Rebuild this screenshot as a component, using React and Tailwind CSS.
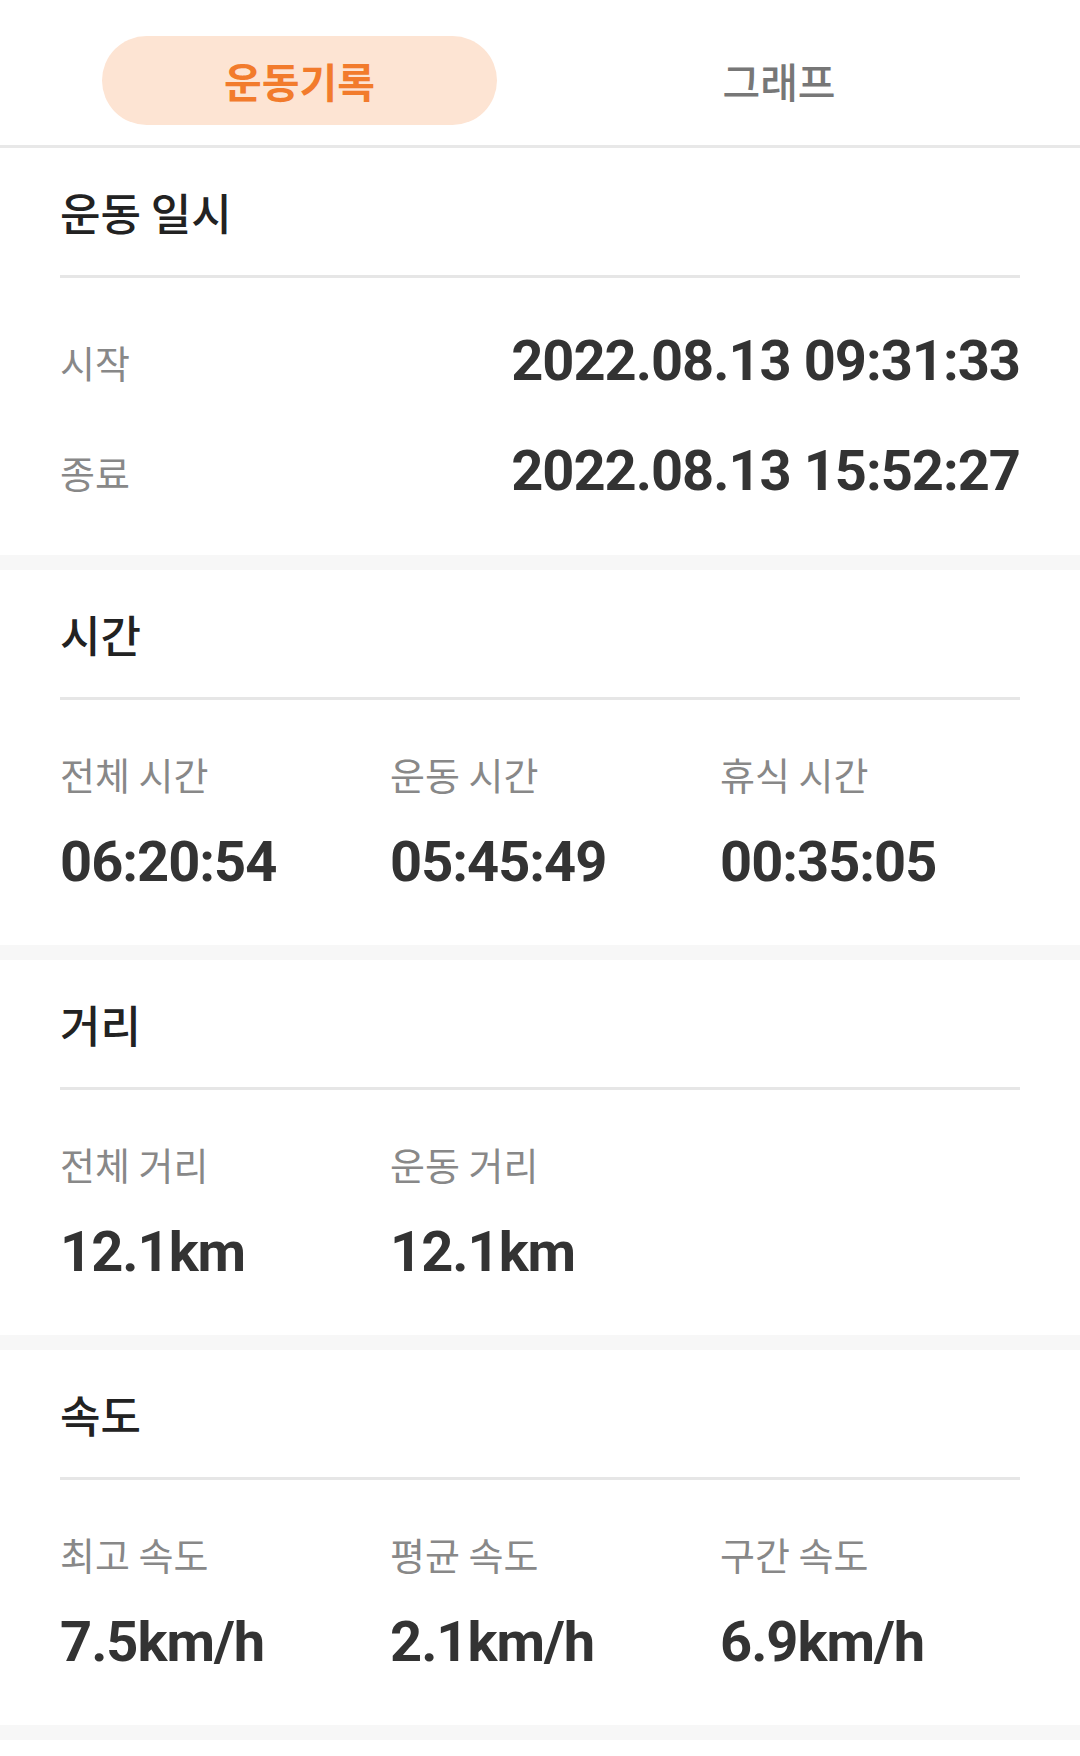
import React from 'react';

const KR = { fontFamily: '"Noto Sans CJK KR", "Noto Sans", sans-serif' };
const NUM = { fontFamily: 'Roboto, "Noto Sans CJK KR", sans-serif' };

const sections = [
    {
        title: '시간',
        items: [
            { label: '전체 시간', value: '06:20:54' },
            { label: '운동 시간', value: '05:45:49' },
            { label: '휴식 시간', value: '00:35:05' },
        ],
    },
    {
        title: '거리',
        items: [
            { label: '전체 거리', value: '12.1km' },
            { label: '운동 거리', value: '12.1km' },
        ],
    },
    {
        title: '속도',
        items: [
            { label: '최고 속도', value: '7.5km/h' },
            { label: '평균 속도', value: '2.1km/h' },
            { label: '구간 속도', value: '6.9km/h' },
        ],
    },
];

function SectionHeader({ title }) {
    return (
        <div className="mx-[60px] h-[130px] flex flex-col">
            <div className="flex-1 flex items-center text-[44px] font-medium text-[#222]" style={KR}>
                {title}
            </div>
            <div className="h-[3px] bg-[#e6e6e6]" />
        </div>
    );
}

function Gap() {
    return <div className="h-[15px] bg-[#f7f7f7]" />;
}

export default function App() {
    return (
        <div className="w-[1080px] h-[1756px] bg-white overflow-hidden">
            {/* Tabs */}
            <div className="h-[145px] flex items-start pt-[36px] pl-[102px]">
                <div className="w-[395px] h-[89px] rounded-full bg-[#fde4d3] flex items-center justify-center">
                    <span className="text-[41px] font-bold text-[#f27b2c]" style={KR}>운동기록</span>
                </div>
                <div className="w-[564px] h-[89px] flex items-center justify-center">
                    <span className="text-[41px] font-medium text-[#777]" style={KR}>그래프</span>
                </div>
            </div>
            <div className="h-[3px] bg-[#e8e8e8]" />

            {/* 운동 일시 */}
            <SectionHeader title="운동 일시" />
            <div className="mx-[60px] pt-[43px] pb-[44px] flex flex-col gap-[30px]">
                {[
                    { label: '시작', value: '2022.08.13 09:31:33' },
                    { label: '종료', value: '2022.08.13 15:52:27' },
                ].map((row) => (
                    <div key={row.label} className="h-[80px] flex items-center justify-between">
                        <span className="text-[38px] text-[#888]" style={KR}>{row.label}</span>
                        <span className="text-[56px] font-bold text-[#333] tracking-[-1px]" style={NUM}>{row.value}</span>
                    </div>
                ))}
            </div>

            {sections.map((s) => (
                <div key={s.title}>
                    <Gap />
                    <SectionHeader title={s.title} />
                    <div className="mx-[60px] pt-[50px] pb-[53px] grid grid-cols-[330px_330px_1fr]">
                        {s.items.map((it) => (
                            <div key={it.label} className="flex flex-col gap-[34px]">
                                <span className="h-[48px] leading-[48px] text-[38px] text-[#888]" style={KR}>{it.label}</span>
                                <span className="h-[60px] leading-[60px] text-[56px] font-bold text-[#333] tracking-[-1px]" style={NUM}>{it.value}</span>
                            </div>
                        ))}
                    </div>
                </div>
            ))}
            <Gap />
        </div>
    );
}
